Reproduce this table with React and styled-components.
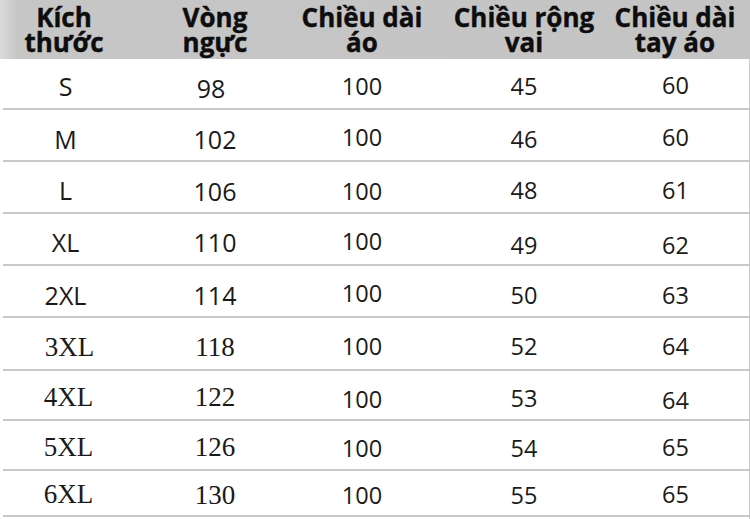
import React from "react";
import styled, { createGlobalStyle } from "styled-components";

const Global = createGlobalStyle`
  html, body { margin: 0; padding: 0; background: #fff; }
  body { width: 750px; height: 519px; overflow: hidden; }
`;

const Table = styled.div`
  width: 750px;
  height: 519px;
  background: #fff;
  display: flex;
  flex-direction: column;
`;

const COLS = "128px 174px 120px 204px 122px";

const Header = styled.div`
  display: grid;
  grid-template-columns: ${COLS};
  height: 59px;
  background: linear-gradient(to right, #dadada 0px, #c6c6c6 18px, #c4c4c4 100%);
  font-family: "Open Sans", "Noto Sans", sans-serif;
  font-weight: 700;
  font-size: 26px;
  line-height: 25px;
  color: #0d0d0d;
`;

const HeadCell = styled.div`
  display: flex;
  align-items: center;
  justify-content: center;
  text-align: center;
  white-space: nowrap;
  padding-top: 0px;
  -webkit-text-stroke: 0.4px #0d0d0d;
  ${(p) => (p.$last ? "padding-right: 24px;" : "")}
`;

const Body = styled.div`
  display: flex;
  flex-direction: column;
  margin-left: 3px;
  width: 746px;
  border-right: 2px solid #cacaca;
  flex: 1;
`;

const Row = styled.div`
  display: grid;
  grid-template-columns: 125px 174px 120px 204px 123px;
  height: ${(p) => p.$h}px;
  box-sizing: border-box;
  border-bottom: 2px solid #c9c9c9;
`;

const Cell = styled.div`
  display: flex;
  align-items: center;
  justify-content: center;
  padding-top: ${(p) => 5 + (p.$dy || 0) * 2}px;
  padding-left: ${(p) => (p.$dx > 0 ? p.$dx * 2 : 0)}px;
  padding-right: ${(p) => (p.$dx < 0 ? -p.$dx * 2 : 0) + (p.$last ? 24 : 0)}px;
  color: #1a1a1a;
  white-space: nowrap;
  font-family: ${(p) =>
    p.$serif
      ? '"Liberation Serif", "DejaVu Serif", serif'
      : '"Open Sans", "Noto Sans", sans-serif'};
  font-size: ${(p) => (p.$serif ? 27 : p.$big ? 25 : 23.5)}px;
`;

const rows = [
  { h: 51, c: [["S", 0, 0], ["98", 2, -4], ["100", 0, 0], ["45", 0, 0], ["60", -1, 0]] },
  { h: 52, c: [["M", 1, 0], ["102", 1, 0], ["100", -1, 0], ["46", 1, 0], ["60", -1, 0]] },
  { h: 52, c: [["L", 0, 0], ["106", 1, 0], ["100", 1, 0], ["48", 0, 0], ["61", 0, 0]] },
  { h: 52, c: [["XL", 0, 0], ["110", 0, 0], ["100", -1, 0], ["49", 3, 0], ["62", 3, 0]] },
  { h: 52, c: [["2XL", 1, 0], ["114", 1, 0], ["100", -1, 0], ["50", 1, 0], ["63", 1, 0]] },
  { h: 53, c: [["3XL", 1, 4, 1], ["118", 1, 0, 1], ["100", 0, 0], ["52", 0, 0], ["64", 0, 0]] },
  { h: 50, c: [["4XL", 0, 3, 1], ["122", 0, 0, 1], ["100", 1, 0], ["53", 0, 0], ["64", 2, 0]] },
  { h: 50, c: [["5XL", 0, 3, 1], ["126", 0, 0, 1], ["100", 0, 0], ["54", 0, 0], ["65", -1, 0]] },
  { h: 46, c: [["6XL", -1, 3, 1], ["130", 0, 0, 1], ["100", -1, 0], ["55", -1, 0], ["65", -2, 0]] },
];

const headers = [
  ["Kích", "thước"],
  ["Vòng", "ngực"],
  ["Chiều dài", "áo"],
  ["Chiều rộng", "vai"],
  ["Chiều dài", "tay áo"],
];

export default function App() {
  return (
    <>
      <Global />
      <Table>
        <Header>
          {headers.map((h, i) => (
            <HeadCell key={i} $last={i === 4}>
              {h[0]}
              <br />
              {h[1]}
            </HeadCell>
          ))}
        </Header>
        <Body>
          {rows.map((r, ri) => (
            <Row key={ri} $h={r.h}>
              {r.c.map(([t, dy, dx, serif], ci) => (
                <Cell
                  key={ci}
                  $dy={dy}
                  $dx={dx}
                  $serif={!!serif}
                  $big={ci < 2}
                  $last={ci === 4}
                >
                  {t}
                </Cell>
              ))}
            </Row>
          ))}
        </Body>
      </Table>
    </>
  );
}
